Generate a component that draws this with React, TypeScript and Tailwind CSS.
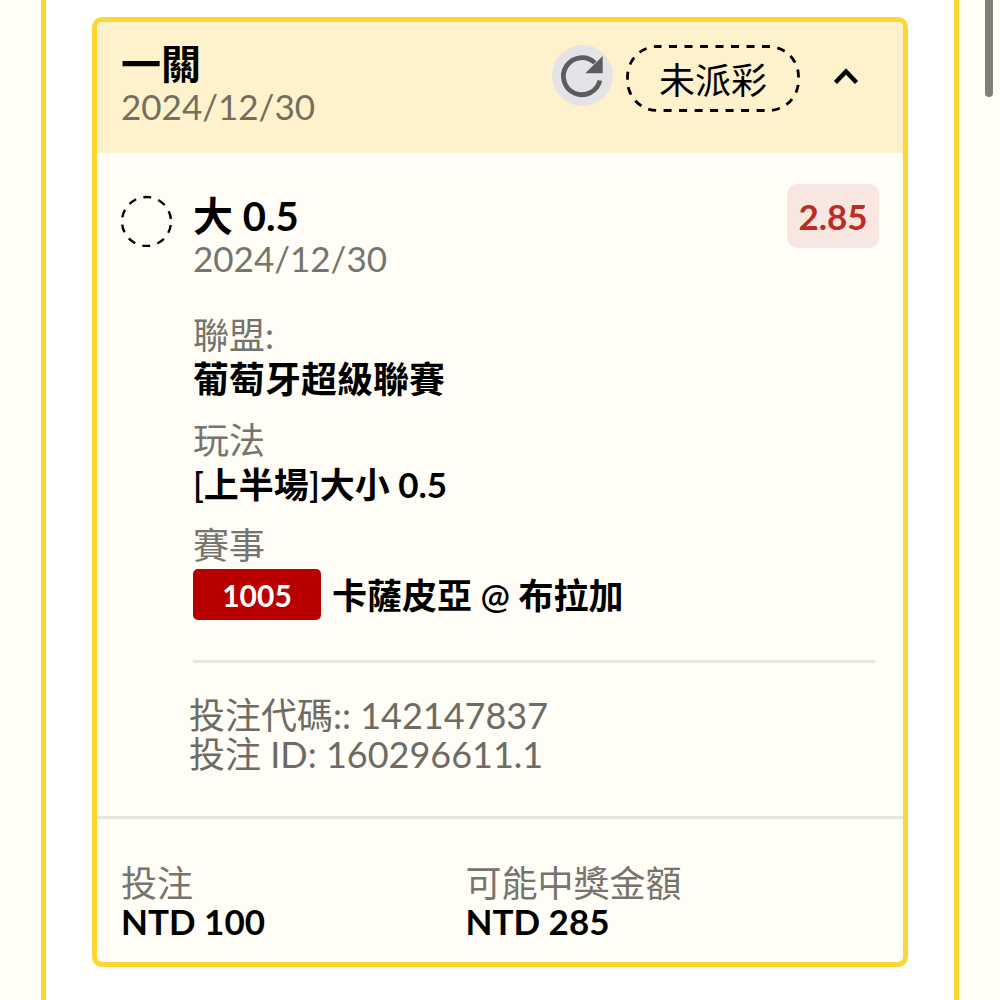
import { useState } from 'react'

interface Field {
  label: string
  value: string
}

const totals: Field[] = [
  { label: '投注', value: 'NTD 100' },
  { label: '可能中獎金額', value: 'NTD 285' },
]

function ReloadIcon() {
  return (
    <svg viewBox="0 0 61 61" className="size-full" aria-hidden="true">
      <path
        d="M42.8 17.9 A18.5 18.5 0 1 0 47.9 35.5"
        fill="none"
        stroke="#5b5c60"
        strokeWidth="4.8"
      />
      <path d="M50.7 11 V28.3 H33.3 Z" fill="#5b5c60" />
    </svg>
  )
}

function Chevron({ open }: { open: boolean }) {
  return (
    <svg viewBox="0 0 26 18" className={open ? 'h-[18px] w-[26px]' : 'h-[18px] w-[26px] rotate-180'} aria-hidden="true">
      <path d="M2.5 15.5 L13 4.5 L23.5 15.5" fill="none" stroke="#000" strokeWidth="4.4" />
    </svg>
  )
}

export default function App() {
  const [open, setOpen] = useState(true)

  return (
    <div className="relative min-h-screen bg-[#fffdf5] px-[41px] font-['Lato','Noto_Sans_CJK_TC',sans-serif] text-[36px] text-black">
      <main className="min-h-screen border-x-[5px] border-[#fed634] bg-white px-[46px] pt-[17px] pb-8">
        <article className="overflow-hidden rounded-[10px] border-[5px] border-[#fed634] bg-[#fffdf5]">
          {/* Header */}
          <header className="flex items-start justify-between bg-[#fef2cc] px-6 pt-[21px] pb-[26px]">
            <div>
              <h2 className="text-[40px] leading-[42px] font-bold">一關</h2>
              <p className="text-[35px] leading-[42px] text-[#736e5f]">2024/12/30</p>
            </div>
            <div className="mt-0.5 flex items-start gap-[13px]">
              <button type="button" aria-label="重新整理" className="size-[61px] rounded-full bg-[#e4e4e6]">
                <ReloadIcon />
              </button>
              <span className="relative flex h-[67px] w-[174px] items-center justify-center pt-0.5">
                <svg viewBox="0 0 174 67" className="absolute inset-0 size-full" aria-hidden="true">
                  <rect
                    x="1.5"
                    y="1.5"
                    width="171"
                    height="64"
                    rx="30"
                    fill="none"
                    stroke="#000"
                    strokeWidth="2.8"
                    strokeDasharray="8 7.5"
                    strokeDashoffset="4"
                  />
                </svg>
                未派彩
              </span>
              <button
                type="button"
                aria-label="展開"
                aria-expanded={open}
                onClick={() => setOpen((o) => !o)}
                className="flex h-[61px] w-[66px] items-center justify-center"
              >
                <Chevron open={open} />
              </button>
            </div>
          </header>

          {/* Selection */}
          {open && (
            <section className="pt-[42px]">
              <div className="flex items-start gap-5 px-6">
                <svg viewBox="0 0 52 52" className="size-[52px] shrink-0" aria-hidden="true">
                  <circle
                    cx="25.5"
                    cy="26.5"
                    r="24.5"
                    fill="none"
                    stroke="#000"
                    strokeWidth="2.4"
                    strokeDasharray="8 7.4"
                    strokeDashoffset="-3.7"
                  />
                </svg>
                <div className="min-w-0 flex-1">
                  <div className="flex items-start justify-between">
                    <div>
                      <h3 className="text-[40px] leading-[42px] font-bold">大 0.5</h3>
                      <p className="text-[35px] leading-[42px] text-[#75746e]">2024/12/30</p>
                    </div>
                    <span className="-mt-[11px] flex h-16 w-[92px] items-center justify-center rounded-[10px] bg-[#f8e7e0] text-[35px] font-bold text-[#bf2a24]">
                      2.85
                    </span>
                  </div>

                  <dl className="mt-[34px] flex flex-col gap-[17px] leading-[44px]">
                    <div>
                      <dt className="text-[#75746e]">聯盟:</dt>
                      <dd className="font-bold">葡萄牙超級聯賽</dd>
                    </div>
                    <div>
                      <dt className="text-[#75746e]">玩法</dt>
                      <dd className="text-[35px] font-bold">
                        <span className="font-semibold">[</span>上半場<span className="font-semibold">]</span>大小 0.5
                      </dd>
                    </div>
                    <div>
                      <dt className="text-[#75746e]">賽事</dt>
                      <dd className="mt-0.5 flex items-center gap-[11px] text-[35px] font-bold">
                        <span className="flex h-[51px] w-32 items-center justify-center rounded-[5px] bg-[#b80000] text-[30px] text-white">
                          1005
                        </span>
                        <span>
                          卡薩皮亞 <span className="font-semibold">@</span> 布拉加
                        </span>
                      </dd>
                    </div>
                  </dl>

                  <hr className="mt-10 mr-1 border-t-[3px] border-[#e8e5de]" />

                  <div className="mt-[33px] -ml-1 leading-[39px] text-[#6c6b64]">
                    <p>投注代碼:: 142147837</p>
                    <p>投注 ID: 160296611.1</p>
                  </div>
                </div>
              </div>
              <hr className="mt-[42px] border-t-[3px] border-[#e8e5de]" />
            </section>
          )}

          {/* Totals */}
          <dl className="grid grid-cols-[5fr_6fr] px-6 pt-[45px] pb-[22px] leading-[38px]">
            {totals.map((t) => (
              <div key={t.label}>
                <dt className="text-[#75746e]">{t.label}</dt>
                <dd className="text-[35px] font-bold">{t.value}</dd>
              </div>
            ))}
          </dl>
        </article>
      </main>

      {/* Scroll thumb */}
      <div className="absolute top-0 right-[7px] h-[97px] w-2 rounded-b-full bg-[#80807b]" />
    </div>
  )
}
